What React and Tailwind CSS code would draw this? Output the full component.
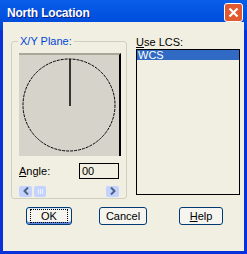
export default function App() {
  return (
    <div className="w-[247px] h-[254px] bg-[#0831d9] flex flex-col" style={{ fontFamily: '"Liberation Sans", Arial, sans-serif' }}>
      <div className="h-[30px] shrink-0 flex items-start justify-between pl-[7px] pr-[4px] pt-[3px] bg-gradient-to-b from-[#0a5ee8] via-[#0252e0] to-[#0046d8]">
        <span className="text-white font-bold text-[12px] leading-[20px] tracking-[-0.2px] [text-shadow:1px_1px_0_#0a1e8c]">North Location</span>
        <div className="w-[19px] h-[19px] rounded-[3px] border border-white bg-[#e0592f] flex items-center justify-center">
          <svg width="11" height="11" viewBox="0 0 11 11"><path d="M1.5 1.5 L9.5 9.5 M9.5 1.5 L1.5 9.5" stroke="white" strokeWidth="2.2" /></svg>
        </div>
      </div>
      <div className="flex-1 mx-[3px] mb-[3px] -mt-[8px] bg-[#f1efe2] flex flex-col px-[8px] pt-[8px]">
        <div className="flex gap-[9px]">
          <div className="relative w-[116px] h-[158px] mt-[11px] border border-[#d0d0bf] rounded-[3px] px-[7px] pt-[11px]">
            <span className="absolute -top-[8px] left-[6px] px-[2px] bg-[#f1efe2] text-[11px] leading-[14px] text-[#0046d5]">X/Y Plane:</span>
            <div className="w-[102px] h-[103px] bg-[#d6d3cb] border-t-[2px] border-[#a9a69a] border-r-[2px] border-r-black">
              <svg width="100" height="101" viewBox="0 0 100 101">
                <circle cx="50" cy="50" r="46" fill="none" stroke="black" strokeWidth="1" strokeDasharray="3 1" />
                <line x1="51" y1="4" x2="51" y2="51" stroke="black" strokeWidth="1.5" />
              </svg>
            </div>
            <div className="flex items-center justify-between mt-[7px]">
              <span className="text-[11px] text-black"><span className="underline">A</span>ngle:</span>
              <div className="w-[40px] h-[16px] border border-black bg-[#f1efe2] text-[11px] leading-[14px] pl-[2px]">00</div>
            </div>
            <div className="flex justify-between mt-[6px] h-[11px]">
              <div className="flex gap-[2px]">
                <div className="w-[13px] h-[11px] bg-[#c3d3fd] rounded-[2px] flex items-center justify-center">
                  <svg width="6" height="8" viewBox="0 0 6 8"><path d="M5 0.5 L1.5 4 L5 7.5" stroke="#4d6185" strokeWidth="2" fill="none" /></svg>
                </div>
                <div className="w-[12px] h-[11px] bg-[#c3d3fd] rounded-[2px] flex items-center justify-center gap-[1px]">
                  <div className="w-[1px] h-[5px] bg-[#eef2fd]" /><div className="w-[1px] h-[5px] bg-[#eef2fd]" /><div className="w-[1px] h-[5px] bg-[#eef2fd]" />
                </div>
              </div>
              <div className="w-[13px] h-[11px] bg-[#c3d3fd] rounded-[2px] flex items-center justify-center">
                <svg width="6" height="8" viewBox="0 0 6 8"><path d="M1 0.5 L4.5 4 L1 7.5" stroke="#4d6185" strokeWidth="2" fill="none" /></svg>
              </div>
            </div>
          </div>
          <div className="flex flex-col pt-[6px]">
            <span className="text-[11px] leading-[12px] text-black"><span className="underline">U</span>se LCS:</span>
            <div className="mt-[1px] w-[104px] h-[146px] border border-black bg-[#f1efe2]">
              <div className="h-[10px] bg-[#316ac5] text-white text-[11px] leading-[10px] pl-[1px]">WCS</div>
            </div>
          </div>
        </div>
        <div className="flex mt-[8px] pl-[15px]">
          <button className="w-[46px] h-[18px] rounded-[3px] border border-[#003c74] bg-[#f5f4ee] text-[11px] leading-[14px] text-black shadow-[inset_0_-2px_0_#5b88e0,inset_0_1px_0_#cee7ff]"><span className="outline outline-1 outline-dotted outline-black px-[10px]">OK</span></button>
          <button className="ml-[27px] w-[48px] h-[18px] rounded-[3px] border border-[#003c74] bg-[#f5f4ee] text-[11px] leading-[14px] text-black">Cancel</button>
          <button className="ml-[32px] w-[44px] h-[18px] rounded-[3px] border border-[#003c74] bg-[#f5f4ee] text-[11px] leading-[14px] text-black"><span className="underline">H</span>elp</button>
        </div>
      </div>
    </div>
  );
}
